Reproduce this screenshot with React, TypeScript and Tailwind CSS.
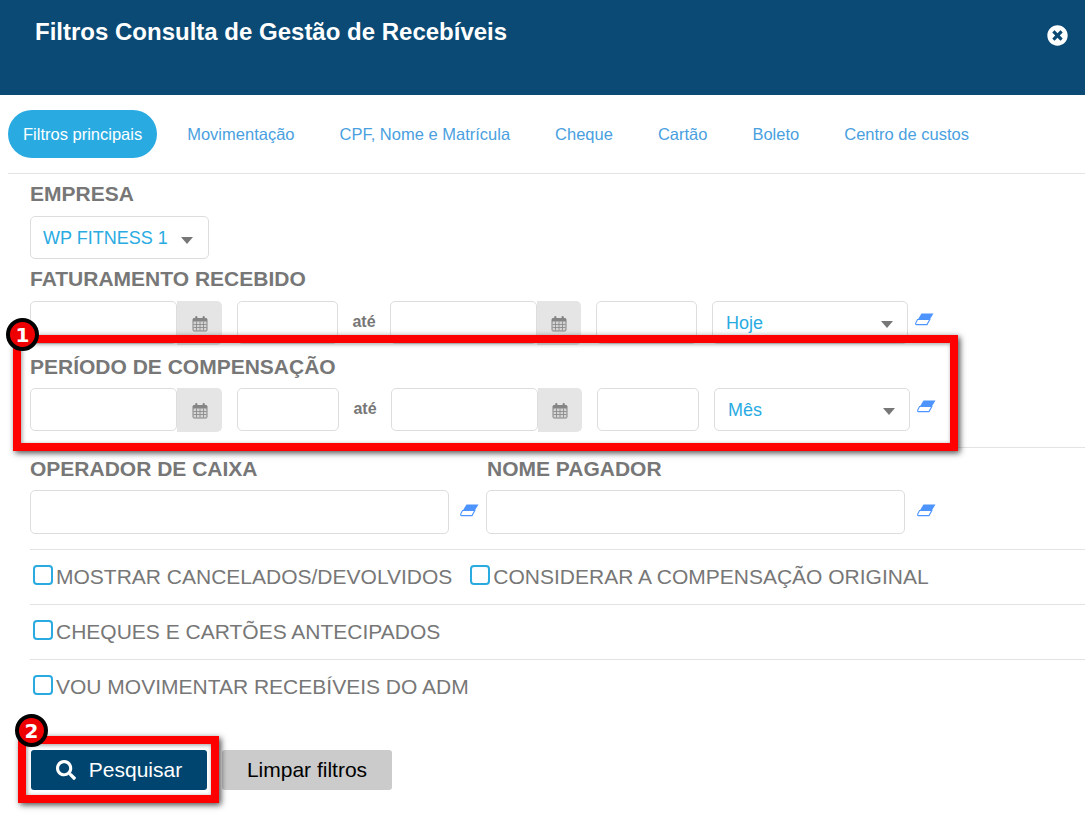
import React from 'react';
import { FaSearch, FaTimesCircle } from 'react-icons/fa';

const tabs = ['Movimentação', 'CPF, Nome e Matrícula', 'Cheque', 'Cartão', 'Boleto', 'Centro de custos'];

const inputCls = 'h-[43px] bg-white border border-[#dddddd] rounded-[5px] shrink-0';

const CalendarIcon = () => (
  <svg width="16" height="17" viewBox="0 0 16 17" fill="none">
    <rect x="1" y="3.5" width="14" height="12.5" rx="1" fill="#d4d4d4" stroke="#858585" />
    <rect x="1" y="3.5" width="14" height="3" fill="#858585" />
    <path d="M1.5 9.5h13M1.5 12.5h13M4.5 6.5v9M8 6.5v9M11.5 6.5v9" stroke="#858585" strokeWidth="0.8" />
    <rect x="3.2" y="1" width="2.2" height="4" rx="1.1" fill="#858585" />
    <rect x="10.6" y="1" width="2.2" height="4" rx="1.1" fill="#858585" />
  </svg>
);

const EraserIcon = () => (
  <svg width="19" height="13" viewBox="0 0 19 13" fill="none">
    <path d="M6.5 0.5H18.5L14.5 7H2.5Z" fill="#4d94ff" />
    <path d="M2.5 6.5H14.8L12 11.6H1.5C0.6 11.6 0.4 10.8 0.9 9.8Z" fill="#fff" stroke="#4d94ff" strokeWidth="1.1" />
  </svg>
);

const Caret = () => (
  <span className="w-0 h-0 border-l-[6px] border-r-[6px] border-t-[7px] border-l-transparent border-r-transparent border-t-[#777777]" />
);

const Label = ({ children, className }: { children: React.ReactNode; className?: string }) => (
  <div className={`text-[21px] leading-[22px] font-bold text-[#777777] whitespace-nowrap ${className || ''}`}>{children}</div>
);

const DateInput = ({ addon }: { addon: string }) => (
  <div className="flex shrink-0">
    <div className={`${inputCls} w-[147px]`} />
    <div className={`${addon} h-[44px] bg-[#e5e5e5] rounded-r-[5px] flex items-center justify-center`}>
      <CalendarIcon />
    </div>
  </div>
);

const PeriodRow = ({ period, wide }: { period: string; wide?: boolean }) => (
  <div className="flex items-start">
    <DateInput addon="w-[45px]" />
    <div className={`${inputCls} ml-[15px] ${wide ? 'w-[102px]' : 'w-[101px]'}`} />
    <div className="w-[52px] h-[43px] flex items-center justify-center text-[16px] font-bold text-[#777777] -mt-[1px]">até</div>
    <DateInput addon={wide ? 'w-[44px]' : 'w-[44px]'} />
    <div className={`${inputCls} ml-[15px] ${wide ? 'w-[102px]' : 'w-[101px]'}`} />
    <div className={`${inputCls} ml-[15px] w-[196px] flex items-center justify-between pl-[13px] pr-[14px] text-[18px] text-[#29abe2]`}>
      <span className="mt-[1px]">{period}</span>
      <span className="mt-[4px] flex"><Caret /></span>
    </div>
    <div className="ml-[7px] mt-[12px] flex"><EraserIcon /></div>
  </div>
);

const CheckItem = ({ text, className }: { text: string; className?: string }) => (
  <div className={`flex items-center ${className || ''}`}>
    <span className="w-[20px] h-[20px] border-2 border-[#29abe2] rounded-[4px] -mt-[5px] ml-[3px] shrink-0 bg-white" />
    <span className="ml-[3px] text-[21px] leading-[22px] text-[#777777] whitespace-nowrap">{text}</span>
  </div>
);

export default function App() {
  return (
    <div className="relative w-[1085px] h-[837px] bg-white overflow-hidden font-['Liberation_Sans',Arial,sans-serif]">
      <header className="h-[95px] bg-[#0a4a75] flex items-start justify-between pl-[35px] pr-[17px]">
        <h1 className="mt-[18px] text-[24px] leading-[28px] font-bold text-white whitespace-nowrap">Filtros Consulta de Gestão de Recebíveis</h1>
        <FaTimesCircle className="mt-[25px] text-white" size={21} />
      </header>

      <nav className="ml-[8px] mt-[15px] h-[64px] pb-[16px] flex gap-[15px] border-b border-[#e3e3e3] text-[16.5px]">
        <div className="h-[48px] px-[15px] pt-[1px] flex items-center rounded-[24px] bg-[#29abe2] text-white whitespace-nowrap">Filtros principais</div>
        {tabs.map((tab) => (
          <div key={tab} className="h-[48px] px-[15px] pt-[1px] flex items-center text-[#4a9fdf] whitespace-nowrap">{tab}</div>
        ))}
      </nav>

      <main className="pl-[30px]">
        <Label className="mt-[9px]">EMPRESA</Label>
        <div className="mt-[11px] h-[43px] w-[179px] border border-[#dddddd] rounded-[5px] flex items-center pl-[12px] text-[18px] text-[#29abe2]">
          <span className="mt-[1px]">WP FITNESS 1</span>
          <span className="ml-[13px] mt-[5px] flex"><Caret /></span>
        </div>
        <Label className="mt-[9px]">FATURAMENTO RECEBIDO</Label>
        <div className="mt-[11px]"><PeriodRow period="Hoje" /></div>
        <Label className="mt-[11px]">PERÍODO DE COMPENSAÇÃO</Label>
        <div className="mt-[10px]"><PeriodRow period="Mês" wide /></div>

        <div className="mt-[15px] border-t border-[#e3e3e3] pt-[10px] flex">
          <div>
            <Label>OPERADOR DE CAIXA</Label>
            <div className="mt-[10px] flex items-start">
              <div className={`${inputCls} !h-[44px] w-[419px]`} />
              <div className="ml-[11px] mt-[14px] flex"><EraserIcon /></div>
            </div>
          </div>
          <div className="ml-[7px]">
            <Label className="ml-[1px]">NOME PAGADOR</Label>
            <div className="mt-[10px] flex items-start">
              <div className={`${inputCls} !h-[44px] w-[419px]`} />
              <div className="ml-[12px] mt-[14px] flex"><EraserIcon /></div>
            </div>
          </div>
        </div>

        <div className="mt-[15px] h-[55px] border-t border-[#e3e3e3] flex items-center">
          <CheckItem text="MOSTRAR CANCELADOS/DEVOLVIDOS" />
          <CheckItem text="CONSIDERAR A COMPENSAÇÃO ORIGINAL" className="ml-[15px]" />
        </div>
        <div className="h-[55px] border-t border-[#e3e3e3] flex items-center">
          <CheckItem text="CHEQUES E CARTÕES ANTECIPADOS" />
        </div>
        <div className="h-[55px] border-t border-[#e3e3e3] flex items-center">
          <CheckItem text="VOU MOVIMENTAR RECEBÍVEIS DO ADM" />
        </div>

        <div className="mt-[36px] flex gap-[15px] ml-[1px]">
          <button className="w-[176px] h-[40px] rounded-[3px] bg-[#00456f] text-white text-[21px] flex items-center justify-center">
            <FaSearch size={20} />
            <span className="ml-[13px]">Pesquisar</span>
          </button>
          <button className="w-[170px] h-[40px] rounded-[3px] bg-[#cbcbcb] text-black text-[21px] flex items-center justify-center">Limpar filtros</button>
        </div>
      </main>

      {/* marcações vermelhas */}
      <div className="absolute left-[13px] top-[335px] w-[945px] h-[116px] border-[8px] border-[#ff0000] shadow-[2px_2px_6px_rgba(0,0,0,0.7),inset_1px_1px_4px_rgba(0,0,0,0.4)]" />
      <div className="absolute left-[6px] top-[318px] w-[33px] h-[33px] rounded-full bg-[#ee0000] border-[4px] border-black flex items-center justify-center text-white font-bold text-[20px] font-['DejaVu_Sans',sans-serif]">1</div>
      <div className="absolute left-[18px] top-[736px] w-[201px] h-[67px] border-[8px] border-[#ff0000] shadow-[2px_2px_6px_rgba(0,0,0,0.7),inset_1px_1px_4px_rgba(0,0,0,0.4)]" />
      <div className="absolute left-[15px] top-[714px] w-[33px] h-[33px] rounded-full bg-[#ee0000] border-[4px] border-black flex items-center justify-center text-white font-bold text-[20px] font-['DejaVu_Sans',sans-serif]">2</div>
    </div>
  );
}
